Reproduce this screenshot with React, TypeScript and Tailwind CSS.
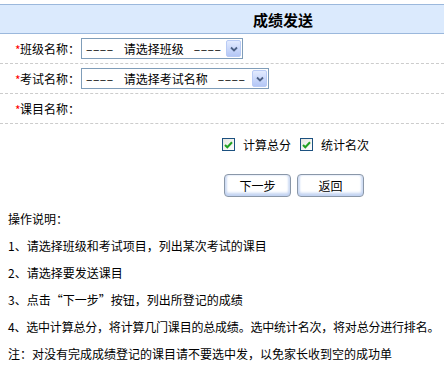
import React from "react";

const font = { fontFamily: '"Noto Sans CJK SC", "Liberation Sans", sans-serif' };

function FakeSelect({ width, label }: { width: string; label: string }) {
  return (
    <div className={`${width} h-[21px] border border-[#7f9db9] bg-white flex items-center justify-between pl-[4px] pr-[1px]`}>
      <span className="text-[12px] leading-none whitespace-pre text-black flex items-center">
        <span className="tracking-[0.5px]">––––</span>
        <span className="ml-[10px]">{label}</span>
        <span className="ml-[10px] tracking-[0.5px]">––––</span>
      </span>
      <div className="w-[15px] h-[17px] rounded-[2px] border border-[#b9cbf5] bg-gradient-to-b from-[#e3ebfe] to-[#b4c7f6] flex items-center justify-center">
        <svg width="8" height="6" viewBox="0 0 8 6">
          <path d="M1 1.5 L4 4.5 L7 1.5" fill="none" stroke="#4d6185" strokeWidth="1.8" />
        </svg>
      </div>
    </div>
  );
}

function Check({ label }: { label: string }) {
  return (
    <label className="flex items-center gap-[8px]">
      <span className="w-[13px] h-[13px] border border-[#1c5180] bg-gradient-to-br from-[#e6e6e0] to-white flex items-center justify-center">
        <svg width="9" height="8" viewBox="0 0 9 8">
          <path d="M1 4 L3.3 6.3 L8 1.3" fill="none" stroke="#21a121" strokeWidth="2" />
        </svg>
      </span>
      <span className="text-[12px] leading-none">{label}</span>
    </label>
  );
}

function Btn({ children }: { children: React.ReactNode }) {
  return (
    <button className="w-[67px] h-[23px] rounded-[4px] border border-[#8a97a8] bg-white text-[12px] leading-none text-black shadow-[inset_0_-3px_3px_#c2d3f2,inset_2px_0_2px_#d6e1f5,inset_-2px_0_2px_#d6e1f5]">
      {children}
    </button>
  );
}

export default function App() {
  const rows = [
    { label: "班级名称：", select: <FakeSelect width="w-[162px]" label="请选择班级" /> },
    { label: "考试名称：", select: <FakeSelect width="w-[188px]" label="请选择考试名称" /> },
    { label: "课目名称：", select: null },
  ];

  const notes = [
    "操作说明：",
    "1、请选择班级和考试项目，列出某次考试的课目",
    "2、请选择要发送课目",
    "3、点击“下一步”按钮，列出所登记的成绩",
    "4、选中计算总分，将计算几门课目的总成绩。选中统计名次，将对总分进行排名。",
    "注：对没有完成成绩登记的课目请不要选中发，以免家长收到空的成功单",
  ];

  return (
    <div className="w-[444px] h-[371px] overflow-hidden bg-white text-black pt-[4px]" style={font}>
      {/* title bar */}
      <div className="h-[30px] border-y border-[#9bb8dc] bg-[#dbeafd] flex items-center pl-[253px]">
        <span className="text-[15px] font-bold leading-none">成绩发送</span>
      </div>

      {rows.map((r) => (
        <div key={r.label} className="h-[30px] border-b border-dashed border-[#cccccc] flex items-center pl-[15px]">
          <span className="text-[#ff0000] text-[12px] leading-none w-[5px] mt-[3px]">*</span>
          <span className="text-[12px] leading-none w-[61px]">{r.label}</span>
          {r.select}
        </div>
      ))}

      <div className="h-[41px] flex items-center pl-[222px] gap-[9px]">
        <Check label="计算总分" />
        <Check label="统计名次" />
      </div>

      <div className="flex gap-[6px] pl-[224px] mt-[9px]">
        <Btn>下一步</Btn>
        <Btn>返回</Btn>
      </div>

      <div className="mt-[8px] pl-[8px] text-[12px] leading-[27px] whitespace-nowrap">
        {notes.map((n, i) => (
          <p key={n} className={i === 4 ? "tracking-[-0.2px]" : ""}>
            {n}
          </p>
        ))}
      </div>
    </div>
  );
}
